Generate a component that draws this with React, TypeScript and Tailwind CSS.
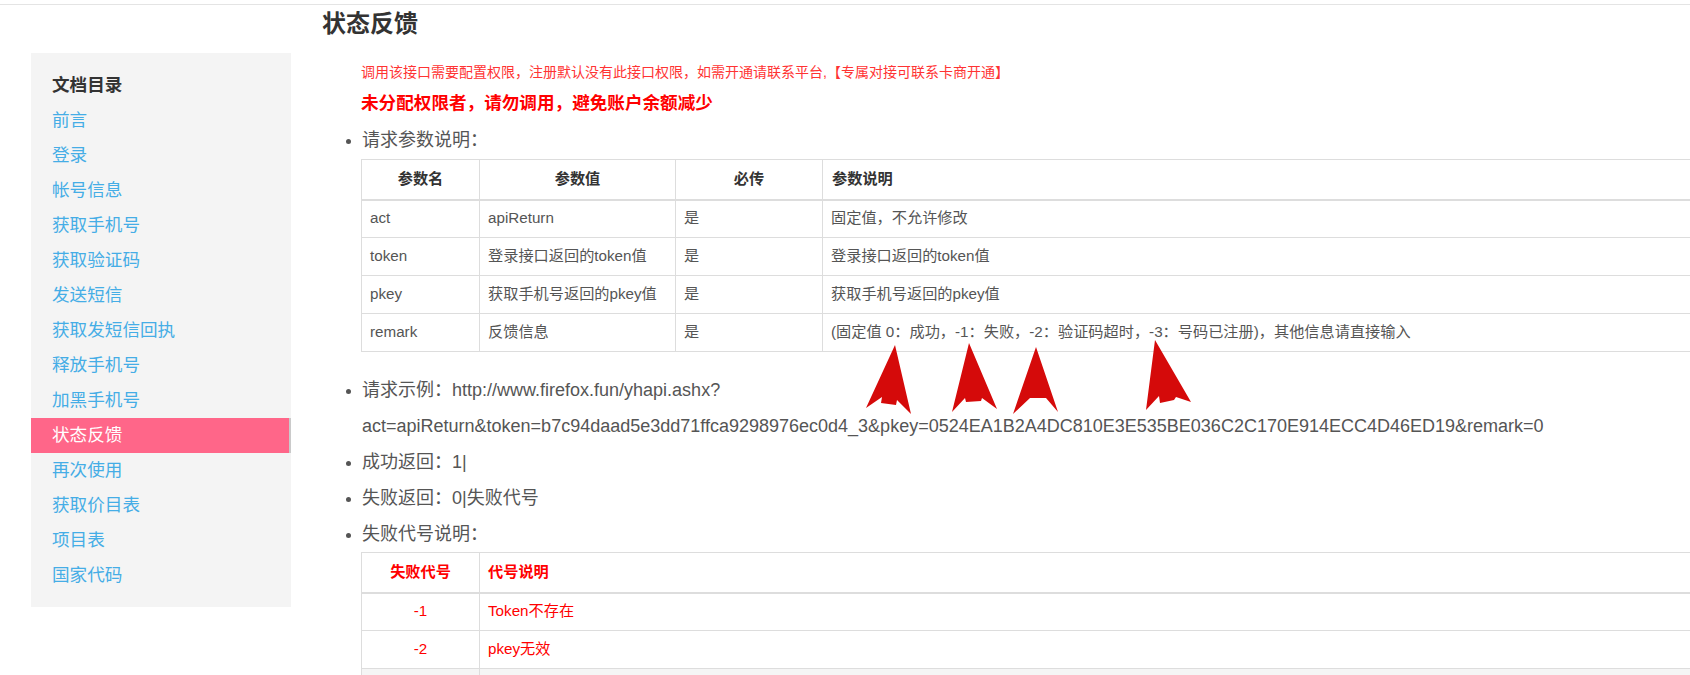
import React from 'react';

const menu = [
  '前言', '登录', '帐号信息', '获取手机号', '获取验证码', '发送短信', '获取发短信回执',
  '释放手机号', '加黑手机号', '状态反馈', '再次使用', '获取价目表', '项目表', '国家代码',
];

const params = [
  ['act', 'apiReturn', '是', '固定值，不允许修改'],
  ['token', '登录接口返回的token值', '是', '登录接口返回的token值'],
  ['pkey', '获取手机号返回的pkey值', '是', '获取手机号返回的pkey值'],
  ['remark', '反馈信息', '是', '(固定值 0：成功，-1：失败，-2：验证码超时，-3：号码已注册)，其他信息请直接输入'],
];

const font = { fontFamily: '"Liberation Sans", Arial, "Noto Sans CJK SC", sans-serif' };

function Bullet({ children }: { children: React.ReactNode }) {
  return (
    <li className="flex">
      <span className="w-[16px] h-[36px] shrink-0 flex items-center">
        <span className="block w-[5px] h-[5px] rounded-full bg-[#555] mt-[3px]" />
      </span>
      <div className="text-[#555]">{children}</div>
    </li>
  );
}

// red hand-drawn annotation arrows from the screenshot
function Arrows() {
  const arrows = [
    '895,345 911,414 897,400 896,405 881,403 882,397 866,408',
    '969,343 997,409 982,398 981,401 966,402 965,398 952,412',
    '1036,347 1058,412 1046,398 1030,398 1013,414',
    '1155,340 1191,402 1176,397 1174,400 1160,403 1159,396 1146,410',
  ];
  return (
    <svg className="absolute left-0 top-0 pointer-events-none" width="1690" height="675" viewBox="0 0 1690 675">
      {arrows.map((p) => (
        <polygon key={p} points={p} fill="#d50a0a" />
      ))}
    </svg>
  );
}

export default function App() {
  return (
    <div className="relative w-[1690px] h-[675px] overflow-hidden bg-white" style={font}>
      <div className="h-[5px] border-b border-[#e4e4e4]" />
      <div className="flex">
        {/* sidebar */}
        <div className="w-[291px] shrink-0 pl-[31px] pt-[48px]">
          <div className="bg-[#f4f4f4] py-[15px] pb-[14px]">
            <div className="h-[35px] leading-[35px] pl-[21px] text-[17.6px] font-bold text-[#333]">文档目录</div>
            {menu.map((m) =>
              m === '状态反馈' ? (
                <div key={m} className="h-[35px] leading-[35px] pl-[21px] text-[17.6px] text-white bg-[#ff6689] border-r-2 border-[#cacaca]">
                  {m}
                </div>
              ) : (
                <div key={m} className="h-[35px] leading-[35px] pl-[21px] text-[17.6px] text-[#45ade6]">
                  {m}
                </div>
              ),
            )}
          </div>
        </div>

        {/* main */}
        <div className="flex-1 pl-[31px] min-w-0">
          <h1 className="mt-[4px] h-[30px] leading-[30px] text-[24px] font-bold text-[#333]">状态反馈</h1>
          <div className="pl-[39px]">
            <p className="mt-[22px] leading-[22px] text-[14px] text-[#f33]">
              调用该接口需要配置权限，注册默认没有此接口权限，如需开通请联系平台,【专属对接可联系卡商开通】
            </p>
            <p className="mt-[7px] leading-[27px] text-[17.6px] font-bold text-[#f00]">
              未分配权限者，请勿调用，避免账户余额减少
            </p>
          </div>

          <ul className="pl-[24px] text-[18px] leading-[36px] mt-[5px]">
            <Bullet>请求参数说明：</Bullet>
          </ul>
          <div className="pl-[39px] mt-[1px]">
            <table className="w-[1340px] border-collapse text-[15.2px] text-[#555]">
              <thead>
                <tr className="h-[40px]">
                  <th className="w-[118px] border border-b-2 border-[#ddd] font-bold text-[#333] text-center">参数名</th>
                  <th className="w-[196px] border border-b-2 border-[#ddd] font-bold text-[#333] text-center">参数值</th>
                  <th className="w-[147px] border border-b-2 border-[#ddd] font-bold text-[#333] text-center">必传</th>
                  <th className="border border-b-2 border-[#ddd] font-bold text-[#333] text-left pl-[9px]">参数说明</th>
                </tr>
              </thead>
              <tbody>
                {params.map((r) => (
                  <tr key={r[0]} className="h-[38px]">
                    {r.map((c, i) => (
                      <td key={i} className="border border-[#ddd] pl-[8px] py-0">
                        {c}
                      </td>
                    ))}
                  </tr>
                ))}
              </tbody>
            </table>
          </div>

          <ul className="pl-[24px] text-[18px] leading-[36px] mt-[20px]">
            <Bullet>
              请求示例：http://www.firefox.fun/yhapi.ashx?
              <br />
              act=apiReturn&amp;token=b7c94daad5e3dd71ffca9298976ec0d4_3&amp;pkey=0524EA1B2A4DC810E3E535BE036C2C170E914ECC4D46ED19&amp;remark=0
            </Bullet>
            <Bullet>成功返回：1|</Bullet>
            <Bullet>失败返回：0|失败代号</Bullet>
            <Bullet>失败代号说明：</Bullet>
          </ul>
          <div className="pl-[39px]">
            <table className="w-[1340px] border-collapse text-[15.2px] text-[#f00]">
              <thead>
                <tr className="h-[40px]">
                  <th className="w-[118px] border border-b-2 border-[#ddd] font-bold text-center">失败代号</th>
                  <th className="border border-b-2 border-[#ddd] font-bold text-left pl-[8px]">代号说明</th>
                </tr>
              </thead>
              <tbody>
                <tr className="h-[38px]">
                  <td className="border border-[#ddd] text-center">-1</td>
                  <td className="border border-[#ddd] pl-[8px]">Token不存在</td>
                </tr>
                <tr className="h-[38px]">
                  <td className="border border-[#ddd] text-center">-2</td>
                  <td className="border border-[#ddd] pl-[8px]">pkey无效</td>
                </tr>
                <tr className="h-[38px] bg-[#f5f5f5]">
                  <td className="border border-[#ddd]" />
                  <td className="border border-[#ddd]" />
                </tr>
              </tbody>
            </table>
          </div>
        </div>
      </div>
      <Arrows />
    </div>
  );
}
